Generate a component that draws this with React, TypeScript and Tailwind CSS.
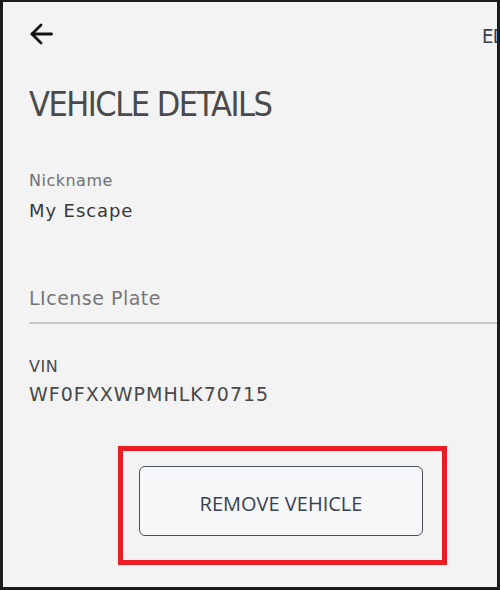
export default function App() {
  return (
    <div className="w-[500px] h-[590px] bg-[#f3f3f3] border-t-2 border-l-[3px] border-r-[3px] border-b-[3px] border-[#1c1c1c] overflow-hidden font-['DejaVu_Sans',sans-serif]">
      <div className="pl-[26px] flex flex-col">
        {/* Header */}
        <div className="mt-[20px] flex items-center justify-between h-[24px]">
          <svg width="24" height="24" viewBox="0 0 24 24" fill="none" stroke="#111" strokeWidth="2.8" strokeLinecap="round" strokeLinejoin="round">
            <path d="M12 3 L3 12 L12 21" />
            <path d="M3 12 H22.5" />
          </svg>
          <span className="w-[15px] whitespace-nowrap text-[20px] leading-none text-[#3a3f4a] pt-[3px] tracking-[-0.5px] font-['DejaVu_Sans_Condensed','DejaVu_Sans',sans-serif] font-stretch-condensed">
            EDIT
          </span>
        </div>

        <h1 className="mt-[41px] h-[35px] text-[34px] leading-none font-light text-[#4a4a4a] font-['Liberation_Sans_Narrow','DejaVu_Sans_Condensed',Lato,sans-serif] tracking-[-1.5px]">
          VEHICLE DETAILS
        </h1>

        {/* Nickname */}
        <div className="mt-[51px] text-[16px] leading-none tracking-[0.5px] text-[#707070]">Nickname</div>
        <div className="mt-[13px] text-[18px] leading-none tracking-[0.9px] text-[#383838]">My Escape</div>

        {/* License plate */}
        <div className="mt-[69px] text-[19px] leading-none tracking-[0.5px] text-[#777777]">LIcense Plate</div>
        <div className="mt-[14px] h-[2px] bg-[#c9c9c9]" />

        {/* VIN */}
        <div className="mt-[35px] text-[16px] leading-none tracking-[0.5px] text-[#4a4a4a]">VIN</div>
        <div className="mt-[10px] text-[19px] leading-none tracking-[1px] text-[#484848]">WF0FXXWPMHLK70715</div>

        {/* Remove vehicle, highlighted */}
        <div className="mt-[42px] ml-[89px] w-[329px] h-[119px] border-[5px] border-[#ec1c24] pt-[15px] pl-[16px]">
          <button className="w-[284px] h-[70px] rounded-[6px] border-[1.5px] border-[#4b5058] bg-[#f6f7f9] flex items-center justify-center pt-[6px] text-[20px] text-[#3b4150] font-['Open_Sans',sans-serif]">
            REMOVE VEHICLE
          </button>
        </div>
      </div>
    </div>
  );
}
